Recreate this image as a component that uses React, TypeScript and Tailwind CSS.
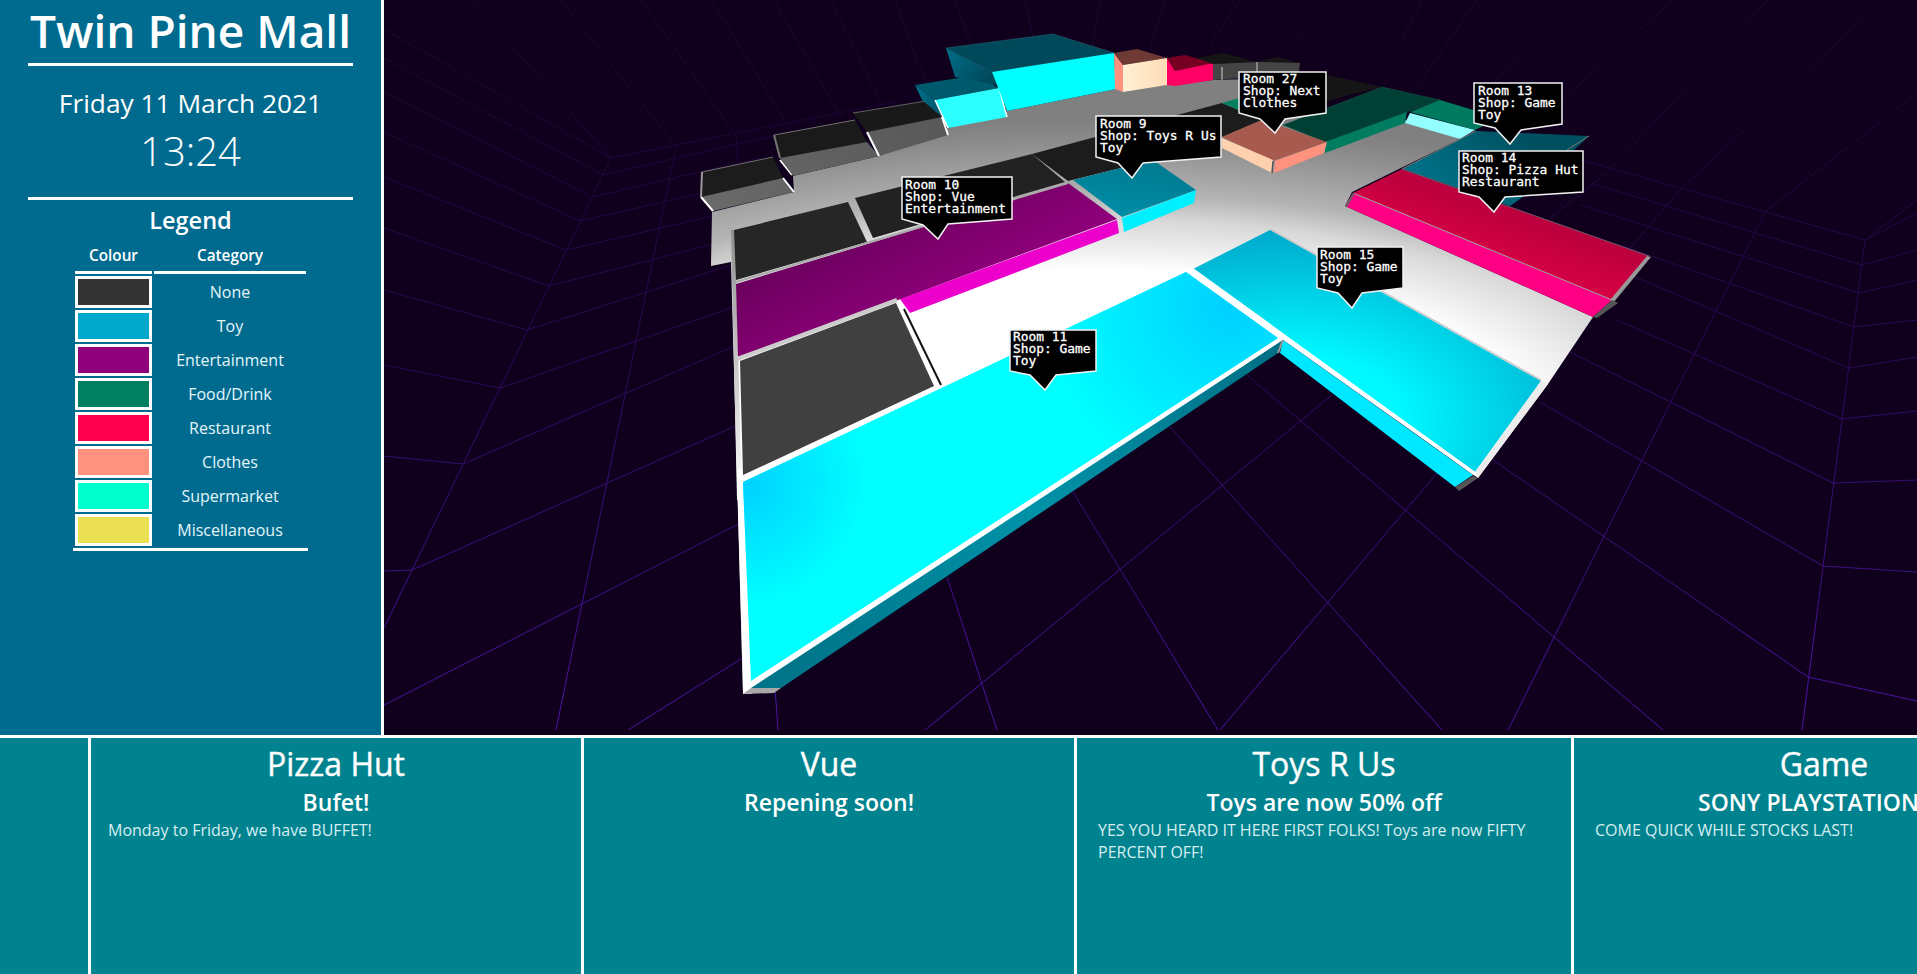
const LEGEND = [
  { name: 'None', swatch: 'bg-[#333333]' },
  { name: 'Toy', swatch: 'bg-[#00a9cc]' },
  { name: 'Entertainment', swatch: 'bg-[#8f007a]' },
  { name: 'Food/Drink', swatch: 'bg-[#008060]' },
  { name: 'Restaurant', swatch: 'bg-[#ff0050]' },
  { name: 'Clothes', swatch: 'bg-[#ff917f]' },
  { name: 'Supermarket', swatch: 'bg-[#00ffcc]' },
  { name: 'Miscellaneous', swatch: 'bg-[#ebe054]' },
]

const DEALS = [
  { shop: 'Pizza Hut', title: 'Bufet!', body: 'Monday to Friday, we have BUFFET!', box: 'w-[493px] px-[17px]', head: '' },
  { shop: 'Vue', title: 'Repening soon!', body: '', box: 'w-[493px] px-[17px]', head: '' },
  {
    shop: 'Toys R Us',
    title: 'Toys are now 50% off',
    body: 'YES YOU HEARD IT HERE FIRST FOLKS! Toys are now FIFTY PERCENT OFF!',
    box: 'w-[497px] px-[21px]',
    head: '',
  },
  // the strip runs off the screen here, the heading is centred on a longer line in the reference
  { shop: 'Game', title: 'SONY PLAYSTATION', body: 'COME QUICK WHILE STOCKS LAST!', box: 'w-[503px] px-[21px]', head: 'pr-[31px]' },
]

// bubbles are drawn in the scene, the labels sit on top of them
const LABELS = [
  { lines: ['Room 10', 'Shop: Vue', 'Entertainment'], pos: 'left-[521px] top-[179px]' },
  { lines: ['Room 9', 'Shop: Toys R Us', 'Toy'], pos: 'left-[716px] top-[118px]' },
  { lines: ['Room 27', 'Shop: Next', 'Clothes'], pos: 'left-[859px] top-[73px]' },
  { lines: ['Room 13', 'Shop: Game', 'Toy'], pos: 'left-[1094px] top-[85px]' },
  { lines: ['Room 14', 'Shop: Pizza Hut', 'Restaurant'], pos: 'left-[1078px] top-[152px]' },
  { lines: ['Room 15', 'Shop: Game', 'Toy'], pos: 'left-[936px] top-[249px]' },
  { lines: ['Room 11', 'Shop: Game', 'Toy'], pos: 'left-[629px] top-[331px]' },
]

const BUBBLES = [
  '902,177 1012,177 1012,219 948,224 938,239 923,225 902,219',
  '1096,116 1221,116 1221,157 1143,163 1132,178 1118,163 1096,157',
  '1239,72 1326,72 1326,113 1285,119 1275,133 1260,119 1239,113',
  '1474,83 1562,83 1562,124 1521,130 1510,144 1495,128 1474,123',
  '1459,151 1583,151 1583,192 1505,197 1494,212 1479,197 1459,192',
  '1317,247 1403,247 1403,288 1362,293 1352,308 1338,293 1317,288',
  '1010,330 1096,330 1096,371 1056,375 1045,390 1030,375 1010,371',
]

const GRID = [
  // left ridge and the wall lines running off it
  'M611 158L412 570L384 628',
  'M384 29L611 158M384 58L603 175M384 92L592 197M384 132L580 221M384 177L566 250M384 228L549 286M384 290L527 330M384 365L500 388M384 456L463 464M384 571L412 570',
  // floor lines, left side
  'M611 158L900 101M603 175L790 132M592 197L760 158M580 221L750 182M566 250L760 205M549 286L760 232M527 330L760 256M500 388L760 298M463 464L760 335M412 570L760 415M384 705L760 513M628 730L760 647',
  // cross lines, left side
  'M676 147L556 730M736 136L778 730',
  // back wall fans
  'M611 158L471 0M676 147L561 0M736 136L641 0M791 130L711 0M841 117L774 0M882 105L831 0M930 95L895 0M985 82L955 0M1040 70L1025 0M1090 60L1100 0M1150 50L1165 0M1210 45L1240 0M1290 45L1330 0M1400 43L1423 0M1417 87L1477 0M1483 93L1580 0M1543 117L1673 0M1610 170L1768 0M1681 189L1883 0M1765 212L1917 93M1865 240L1917 200',
  // below the building
  'M1170 427L1442 730M1073 492L1218 730M947 577L997 730M1247 375L1663 730',
  'M1332 395L925 730M1220 730L1437 473',
  // right side
  'M1508 730L1765 212M1802 730L1865 240',
  'M1808 677L1493 460M1823 566L1540 402M1833 483L1570 352M1842 419L1617 320M1849 368L1600 262M1854 327L1620 245M1859 293L1580 205M1862 265L1590 183M1865 240L1570 157',
  'M1681 189L1630 248M1610 170L1548 220',
  'M1854 327L1917 320M1849 368L1917 357M1842 419L1917 411M1833 483L1917 480M1823 566L1917 572M1808 677L1917 701M1865 240L1917 213M1862 265L1917 250M1859 293L1917 280',
]

function Scene() {
  return (
    <svg viewBox="384 0 1533 735" className="block h-full w-full">
      <defs>
        <linearGradient id="gridFade" gradientUnits="userSpaceOnUse" x1="0" y1="100" x2="0" y2="700">
          <stop offset="0" stopColor="#1d0432" />
          <stop offset="0.45" stopColor="#2c0858" />
          <stop offset="1" stopColor="#4a14a0" />
        </linearGradient>
        <radialGradient id="floor" gradientUnits="userSpaceOnUse" cx="0" cy="0" r="1" gradientTransform="translate(1100 420) scale(857 300)">
          <stop offset="0.5" stopColor="#ffffff" />
          <stop offset="0.667" stopColor="#d8d8d8" />
          <stop offset="0.75" stopColor="#b4b4b4" />
          <stop offset="0.81" stopColor="#a6a6a6" />
          <stop offset="0.94" stopColor="#8a8a8a" />
          <stop offset="1" stopColor="#808080" />
        </radialGradient>
        <linearGradient id="rail" gradientUnits="userSpaceOnUse" x1="0" y1="230" x2="0" y2="500">
          <stop offset="0" stopColor="#8f8f8f" />
          <stop offset="1" stopColor="#ffffff" />
        </linearGradient>
        <radialGradient id="cyanCornerA" gradientUnits="userSpaceOnUse" cx="743" cy="482" r="125">
          <stop offset="0" stopColor="#00d0ff" />
          <stop offset="1" stopColor="#00d0ff" stopOpacity="0" />
        </radialGradient>
        <radialGradient id="cyanCornerB" gradientUnits="userSpaceOnUse" cx="1230" cy="305" r="190">
          <stop offset="0" stopColor="#00d0ff" />
          <stop offset="1" stopColor="#00d0ff" stopOpacity="0" />
        </radialGradient>
        <radialGradient id="blueRoof" gradientUnits="userSpaceOnUse" cx="0" cy="0" r="1" gradientTransform="translate(1290 420) scale(320 190)">
          <stop offset="0.35" stopColor="#00f8ff" />
          <stop offset="1" stopColor="#00a8cc" />
        </radialGradient>
        <linearGradient id="purple" gradientUnits="userSpaceOnUse" x1="900" y1="200" x2="950" y2="300">
          <stop offset="0" stopColor="#6b005e" />
          <stop offset="1" stopColor="#8f007a" />
        </linearGradient>
        <linearGradient id="red" gradientUnits="userSpaceOnUse" x1="1460" y1="170" x2="1430" y2="260">
          <stop offset="0" stopColor="#b0003a" />
          <stop offset="1" stopColor="#e00048" />
        </linearGradient>
        <linearGradient id="teal" gradientUnits="userSpaceOnUse" x1="1520" y1="130" x2="1460" y2="200">
          <stop offset="0" stopColor="#004f5f" />
          <stop offset="1" stopColor="#006f85" />
        </linearGradient>
        <linearGradient id="blueSmall" gradientUnits="userSpaceOnUse" x1="1140" y1="160" x2="1130" y2="215">
          <stop offset="0" stopColor="#007a90" />
          <stop offset="1" stopColor="#008ca5" />
        </linearGradient>
        <linearGradient id="skirt" gradientUnits="userSpaceOnUse" x1="800" y1="690" x2="1280" y2="340">
          <stop offset="0" stopColor="#007488" />
          <stop offset="0.5" stopColor="#0092a8" />
          <stop offset="1" stopColor="#006f84" />
        </linearGradient>
        <linearGradient id="cream" gradientUnits="userSpaceOnUse" x1="1123" y1="0" x2="1167" y2="0">
          <stop offset="0" stopColor="#fff0d2" />
          <stop offset="1" stopColor="#ffdcb8" />
        </linearGradient>
        <linearGradient id="sideTeal" gradientUnits="userSpaceOnUse" x1="950" y1="50" x2="990" y2="80">
          <stop offset="0" stopColor="#006c85" />
          <stop offset="1" stopColor="#00475a" />
        </linearGradient>
        <linearGradient id="greyFront" gradientUnits="userSpaceOnUse" x1="700" y1="210" x2="950" y2="130">
          <stop offset="0" stopColor="#6a6a6a" />
          <stop offset="1" stopColor="#585858" />
        </linearGradient>
      </defs>

      <path d={GRID.join('')} fill="none" stroke="url(#gridFade)" strokeWidth="1" />
      <rect x="384" y="730" width="1533" height="5" fill="#10001e" />

      {/* walkway */}
      <polygon
        points="712,212 794,192 793,176 879,156 948,128 1007,111 1116,89 1167,85 1213,80 1298,78 1300,110 1325,142 1405,120 1460,139 1352,192 1345,206 1593,317 1548,384 1478,478 1283,340 751,694 743,694 731,262 711,266"
        fill="url(#floor)"
      />
      <polygon points="731,230 735,230 742,500 737,500" fill="url(#rail)" />
      <polygon points="737,470 1190,268 1283,340 751,694 743,694" fill="#ffffff" />
      <polygon points="743,694 751,688 781,688 774,693" fill="#a8a8a8" />

      {/* back row */}
      <polygon points="702,172 773,157 783,178 702,197" fill="#1c1c1c" />
      <polygon points="701,197 783,178 794,192 713,211" fill="url(#greyFront)" />
      <path d="M702 172L773 157" stroke="#6f6f6f" strokeWidth="1" />
      <path d="M701 197L713 211M783 178L794 192M780 160L792 175" stroke="#ffffff" strokeWidth="2" fill="none" />
      <path d="M702 172L701 197" stroke="#999999" strokeWidth="2" />
      <polygon points="774,135 855,120 867,142 780,158" fill="#1a1a1a" />
      <polygon points="780,158 867,142 879,156 793,176" fill="url(#greyFront)" />
      <path d="M774 135L855 120" stroke="#6f6f6f" strokeWidth="1" />
      <path d="M774 135L780 158" stroke="#777777" strokeWidth="2" />
      <polygon points="853,113 932,100 942,117 867,132" fill="#191919" />
      <polygon points="867,132 942,117 948,135 879,156" fill="url(#greyFront)" />
      <path d="M853 113L932 100" stroke="#5f5f5f" strokeWidth="1" />
      <path d="M867 132L879 156M942 117L948 135" stroke="#ffffff" strokeWidth="2" />

      <polygon points="915,85 935,100 942,117 922,100" fill="url(#sideTeal)" />
      <polygon points="915,85 977,75 999,88 935,100" fill="#005a6e" />
      <polygon points="935,100 999,88 1007,117 948,128" fill="#2bffff" />
      <path d="M935 100L948 128M999 88L1007 117" stroke="#ffffff" strokeWidth="1.5" />

      <polygon points="946,48 992,72 997,85 955,77" fill="url(#sideTeal)" />
      <polygon points="946,48 1053,34 1114,53 992,72" fill="#00495a" stroke="#2c6a78" strokeWidth="0.5" />
      <polygon points="992,72 1114,53 1116,89 1007,111" fill="#00ffff" />

      <polygon points="1114,53 1123,65 1123,92 1115,89" fill="#ff917f" />
      <polygon points="1114,53 1137,49 1167,58 1123,65" fill="#6e3a33" />
      <polygon points="1123,65 1167,58 1167,85 1123,92" fill="url(#cream)" />
      <polygon points="1167,58 1175,71 1175,86 1167,85" fill="#ff0064" />
      <polygon points="1167,58 1185,55 1213,63 1175,71" fill="#770022" />
      <polygon points="1175,71 1213,63 1213,80 1175,86" fill="#ff0064" />
      <polygon points="1197,58 1223,53 1257,62 1213,64" fill="#161616" />
      <polygon points="1213,64 1257,62 1257,77 1213,80" fill="#444444" />
      <polygon points="1257,62 1277,57 1300,63 1277,67" fill="#161616" />
      <polygon points="1257,62 1300,63 1298,78 1257,77" fill="#444444" />
      <path d="M1222 67L1222 80M1257 62L1257 77" stroke="#cccccc" strokeWidth="1" />

      {/* right wing */}
      <polygon points="1300,80 1327,75 1382,87 1348,95 1300,110" fill="#151515" />
      <polygon points="1283,125 1382,87 1440,100 1407,112 1325,142" fill="#003f33" stroke="#1d5a4c" strokeWidth="0.5" />
      <polygon points="1325,142 1407,112 1405,123 1325,153" fill="#007c61" />
      <polygon points="1440,100 1500,118 1475,130 1410,112" fill="#007a5e" />
      <polygon points="1410,113 1475,130 1460,139 1405,123" fill="#93ffff" />
      <polygon points="1402,169 1476,131 1589,136 1530,192 1510,206" fill="url(#teal)" />
      <path d="M1402 169L1476 131M1589 136L1567 150" stroke="#777777" strokeWidth="1" fill="none" />
      <polygon points="1353,193 1612,300 1593,317 1345,206" fill="#ff0084" />
      <polygon points="1402,169 1649,256 1612,300 1353,193" fill="url(#red)" />
      <path d="M1353 193L1612 300" stroke="#a8a8a8" strokeWidth="1" />
      <path d="M1402 169L1649 256" stroke="#77586a" strokeWidth="1" />
      <polygon points="1647,256 1651,257 1613,303 1610,300" fill="#9a9a9a" />
      <polygon points="1612,300 1618,303 1597,318 1593,317" fill="#555555" />
      <polygon points="1353,193 1345,206 1347,207 1355,193" fill="#666666" />

      {/* middle block */}
      <polygon points="1032,154 1222,103 1262,120 1222,137 1153,160 1068,181" fill="#1c1c1c" />
      <polygon points="1222,103 1250,95 1300,110 1262,120" fill="#008060" />
      <polygon points="1073,180 1153,160 1196,190 1122,217" fill="url(#blueSmall)" />
      <polygon points="1122,218 1196,190 1194,203 1124,232" fill="#00f0ff" />
      <polygon points="1222,137 1262,120 1327,142 1273,161" fill="#a85a4e" />
      <polygon points="1222,138 1273,160 1272,173 1222,148" fill="#ffd0ae" />
      <polygon points="1275,161 1327,142 1324,153 1274,173" fill="#ff917f" />
      <path d="M1273 161L1272 173" stroke="#555555" strokeWidth="1.5" />

      {/* left rooms */}
      <polygon points="734,230 848,202 867,242 736,280" fill="#262626" />
      <polygon points="855,198 1032,154 1065,182 873,238" fill="#222222" />
      <polygon points="900,299 1117,220 1119,233 910,313" fill="#ee00cc" />
      <polygon points="736,284 1068,183 1117,219 898,300 738,357" fill="url(#purple)" />
      <path d="M737 359L897 300" stroke="#cccccc" strokeWidth="4" />
      <path d="M736 282L1068 183" stroke="#a9a9a9" strokeWidth="2" />
      <polygon points="740,361 896,303 934,386 743,475" fill="#404040" />
      <path d="M904 309L941 385" stroke="#111111" strokeWidth="2" />

      {/* big toy rooms */}
      <polygon points="1283,340 1278,353 781,688 751,688" fill="url(#skirt)" />
      <polygon points="743,482 1186,272 1278,338 751,681" fill="#00ffff" />
      <polygon points="743,482 1186,272 1278,338 751,681" fill="url(#cyanCornerA)" />
      <polygon points="743,482 1186,272 1278,338 751,681" fill="url(#cyanCornerB)" />
      <polygon points="1283,340 1473,475 1455,487 1280,353" fill="#00e8ff" />
      <polygon points="1270,230 1541,381 1475,472 1193,269" fill="url(#blueRoof)" />
      <polygon points="1455,487 1473,476 1478,478 1459,491" fill="#555555" />
      <path d="M1270 229L1541 380" stroke="#c8c8c8" strokeWidth="1.5" />
      <polygon points="1541,381 1548,384 1478,478 1475,472" fill="#ececec" />
      <path d="M1190 268L1475 474" stroke="#ffffff" strokeWidth="3.5" />
      <path d="M1283 340L1278 353" stroke="#9a9a9a" strokeWidth="2" />

      {BUBBLES.map((points) => (
        <polygon key={points} points={points} fill="#000000" stroke="#f2f2f2" strokeWidth="1.5" />
      ))}
    </svg>
  )
}

function Sidebar() {
  return (
    <aside className="flex w-[384px] shrink-0 flex-col items-center border-r-[3px] border-white bg-[#006b8f]">
      <h1 className="h-[63px] text-center text-[46px] leading-[61px] font-semibold">Twin Pine Mall</h1>
      <div className="h-[3px] w-[325px] bg-white" />
      <p className="mt-[18px] text-[26.3px] leading-[38px]">Friday 11 March 2021</p>
      <p className="text-[40px] leading-[58px] font-light">13:24</p>
      <div className="mt-[17px] h-[3px] w-[325px] bg-white" />
      <h2 className="mt-[4px] text-[23.5px] leading-[33px] font-semibold">Legend</h2>
      <div className="mt-[2px] w-[235px]">
        <div className="ml-[2px] flex gap-[2px] text-center text-[15.3px] leading-[32px] font-semibold">
          <div className="w-[77px] border-b-[3px] border-white">Colour</div>
          <div className="w-[152px] border-b-[3px] border-white">Category</div>
        </div>
        <div className="mt-[2px] flex flex-col gap-[2px] border-b-[3px] border-white pb-[2px]">
          {LEGEND.map((item) => (
            <div key={item.name} className="ml-[2px] flex gap-[2px]">
              <div className={`h-[32px] w-[77px] border-[3px] border-white ${item.swatch}`} />
              <div className="w-[152px] text-center text-[16px] leading-[32px] text-[#e4f6fa]">{item.name}</div>
            </div>
          ))}
        </div>
      </div>
    </aside>
  )
}

function DealStrip() {
  return (
    <div className="flex h-[239px] overflow-hidden border-t-[3px] border-white bg-[#00838f]">
      <div className="w-[88px] shrink-0" />
      {DEALS.map((deal) => (
        <section key={deal.shop} className={`shrink-0 border-l-[3px] border-white ${deal.box}`}>
          <h3 className="mt-[4px] text-center text-[32px] leading-[44px] [-webkit-text-stroke:0.4px_white]">{deal.shop}</h3>
          <h4 className={`text-center text-[23px] leading-[32px] font-semibold ${deal.head}`}>{deal.title}</h4>
          <p className="mt-[1px] text-[16px] leading-[22px] text-[#d7eef1]">{deal.body}</p>
        </section>
      ))}
    </div>
  )
}

export default function App() {
  return (
    <div className="flex h-[974px] w-[1917px] flex-col overflow-hidden font-['Open_Sans',sans-serif] text-white">
      <div className="flex h-[735px] shrink-0">
        <Sidebar />
        <main className="relative min-w-0 flex-1 bg-[#10001e]">
          <Scene />
          {LABELS.map((label) => (
            <div
              key={label.lines[0]}
              className={`absolute font-['DejaVu_Sans_Mono',monospace] text-[12.9px] leading-[12px] whitespace-pre text-white [-webkit-text-stroke:0.3px_white] ${label.pos}`}
            >
              {label.lines.join('\n')}
            </div>
          ))}
        </main>
      </div>
      <DealStrip />
    </div>
  )
}
